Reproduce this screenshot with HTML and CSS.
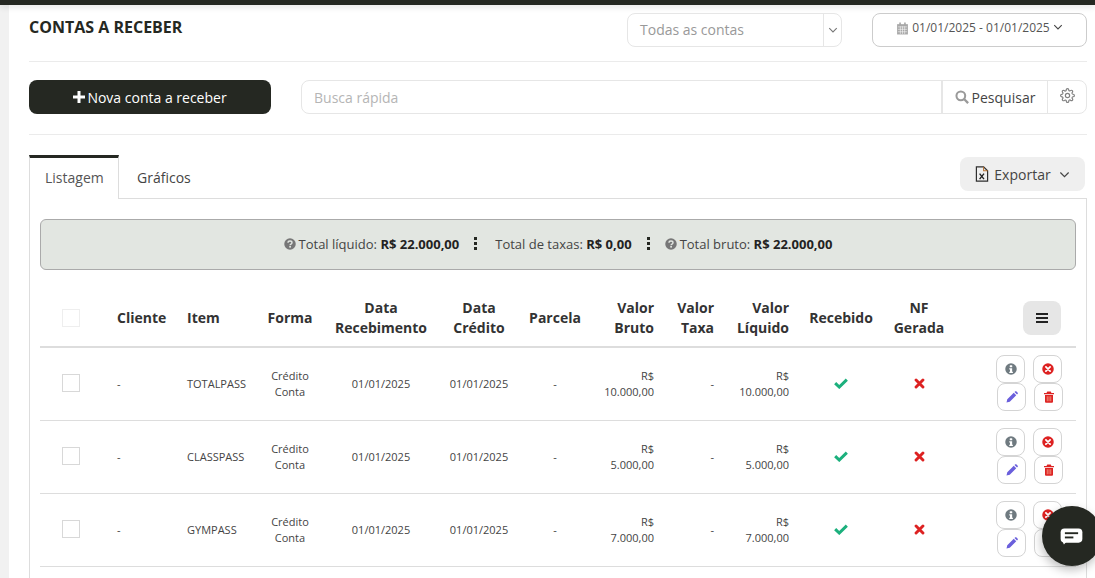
FILE: index.html
```html
<!DOCTYPE html>
<html>

<head>
    <meta http-equiv="Content-Type" content="text/html; charset=utf-8" />
    <title>Contas a receber</title>
    <link rel="stylesheet" href="styles.css">
</head>

<body>
    <svg class="defs" width="0" height="0">
        <symbol id="i-info" viewBox="0 0 24 24">
            <circle cx="12" cy="12" r="11.500" fill="currentColor" />
            <rect x="9.500" y="4.500" width="5" height="4" rx="1" fill="#fff" />
            <path d="M8.500 10.500h5.800v7h1.500v2.500H8.500v-2.500h1.500v-4.500H8.500z" fill="#fff" />
        </symbol>
        <symbol id="i-cancel" viewBox="0 0 24 24">
            <circle cx="12" cy="12" r="11.500" fill="currentColor" />
            <path d="M7.800 7.800l8.400 8.400M16.200 7.800l-8.400 8.400" stroke="#fff" stroke-width="3.600" stroke-linecap="round" />
        </symbol>
        <symbol id="i-pencil" viewBox="0 0 24 24">
            <path d="M1 23l1.500-6.500L15.500 3.500l5 5L7.500 21.500zM17 2l1-1c1-1 2-1 3 0l2 2c1 1 1 2 0 3l-1 1z" fill="currentColor" />
        </symbol>
        <symbol id="i-trash" viewBox="0 0 24 24">
            <path d="M8.500 1h7l1.500 3h5v2.500H2V4h5zM4 8h16v13c0 1.500-1 2.500-2.500 2.500h-11C5 23.500 4 22.500 4 21z" fill="currentColor" />
            <path d="M8.500 10.500v10M12 10.500v10M15.500 10.500v10" stroke="#f5a58e" stroke-width="1.600" />
        </symbol>
        <symbol id="i-check" viewBox="0 0 24 18">
            <path d="M2 8.500l7 6.500L22 2.500" fill="none" stroke="currentColor" stroke-width="5.200" />
        </symbol>
        <symbol id="i-times" viewBox="0 0 24 24">
            <path d="M4.500 4.500l15 15M19.500 4.500l-15 15" fill="none" stroke="currentColor" stroke-width="6.400" stroke-linecap="round" />
        </symbol>
        <symbol id="i-help" viewBox="0 0 24 24">
            <circle cx="12" cy="12" r="11.500" fill="currentColor" />
            <path d="M8 9.500c0-2.300 1.800-3.500 4-3.500s4 1.300 4 3.300c0 3-3.800 2.900-3.800 5.200" fill="none" stroke="#e2e6e1" stroke-width="2.800" />
            <rect x="10.500" y="16" width="3.400" height="3.200" fill="#e2e6e1" />
        </symbol>
        <symbol id="i-chevron" viewBox="0 0 12 12">
            <path d="M1.500 3.800L6 8.300l4.500-4.500" fill="none" stroke="currentColor" stroke-width="1.300" />
        </symbol>
    </svg>

    <div class="topbar"></div>

    <div class="main">
        <div class="head">
            <h1 class="head-title">CONTAS A RECEBER</h1>
            <div class="account-select">
                <span class="account-select-text">Todas as contas</span>
                <span class="account-select-arrow"><svg class="ico-arrow"><use href="#i-chevron" /></svg></span>
            </div>
            <div class="date-range">
                <svg class="ico-cal" viewBox="0 0 24 24">
                    <path d="M2 4h20v19H2z" fill="#a8a8a8" />
                    <path d="M6 1h3v5H6zM15 1h3v5h-3z" fill="#a8a8a8" />
                    <path d="M3.500 9h17M3.500 13.500h17M3.500 18h17M8 8v14M12 8v14M16 8v14" stroke="#fff" stroke-width="1" />
                </svg>
                01/01/2025 - 01/01/2025
                <svg class="ico-10"><use href="#i-chevron" /></svg>
            </div>
        </div>

        <div class="tools">
            <div class="btn-new">
                <svg class="ico-plus" viewBox="0 0 12 12"><path d="M4.500 0h3v4.500H12v3H7.500V12h-3V7.500H0v-3h4.500z" fill="#fff" /></svg>
                Nova conta a receber
            </div>
            <div class="search">
                <span class="search-input">Busca rápida</span>
                <span class="search-btn">
                    <svg class="ico-search" viewBox="0 0 24 24">
                        <circle cx="10" cy="10" r="7.500" fill="none" stroke="#9a9a9a" stroke-width="3.500" />
                        <path d="M15.500 15.500l7 7" stroke="#9a9a9a" stroke-width="4" />
                    </svg>
                    Pesquisar
                </span>
                <span class="search-gear">
                    <svg class="ico-gear" viewBox="0 0 24 24" fill="none" stroke="#808080" stroke-width="1.900">
                        <circle cx="12" cy="12" r="3.400" />
                        <path d="M19.400 15a1.650 1.650 0 0 0 .33 1.820l.06.06a2 2 0 0 1 0 2.830 2 2 0 0 1-2.830 0l-.06-.06a1.650 1.650 0 0 0-1.820-.33 1.650 1.650 0 0 0-1 1.510V21a2 2 0 0 1-2 2 2 2 0 0 1-2-2v-.09A1.650 1.650 0 0 0 9 19.400a1.650 1.650 0 0 0-1.820.33l-.06.06a2 2 0 0 1-2.830 0 2 2 0 0 1 0-2.830l.06-.06a1.650 1.650 0 0 0 .33-1.820 1.650 1.650 0 0 0-1.510-1H3a2 2 0 0 1-2-2 2 2 0 0 1 2-2h.09A1.650 1.650 0 0 0 4.600 9a1.650 1.650 0 0 0-.33-1.820l-.06-.06a2 2 0 0 1 0-2.830 2 2 0 0 1 2.830 0l.06.06a1.650 1.650 0 0 0 1.820.33H9a1.650 1.650 0 0 0 1-1.510V3a2 2 0 0 1 2-2 2 2 0 0 1 2 2v.09a1.650 1.650 0 0 0 1 1.510 1.650 1.650 0 0 0 1.820-.33l.06-.06a2 2 0 0 1 2.830 0 2 2 0 0 1 0 2.830l-.06.06a1.650 1.650 0 0 0-.33 1.820V9a1.650 1.650 0 0 0 1.510 1H21a2 2 0 0 1 2 2 2 2 0 0 1-2 2h-.09a1.650 1.650 0 0 0-1.510 1z" />
                    </svg>
                </span>
            </div>
        </div>

        <div class="tabs">
            <div class="tab tab-on">Listagem</div>
            <div class="tab">Gráficos</div>
            <div class="export">
                <svg class="ico-xls" viewBox="0 0 16 20">
                    <path d="M1 1h9l5 5v13H1z" fill="none" stroke="#2f2f2f" stroke-width="1.500" />
                    <path d="M10 1v5h5" fill="none" stroke="#b8702f" stroke-width="1.300" />
                    <path d="M5 9.500l5.500 7M10.500 9.500l-5.500 7" stroke="#222" stroke-width="1.700" />
                </svg>
                Exportar
                <svg class="ico-11"><use href="#i-chevron" /></svg>
            </div>
        </div>

        <div class="panel">
            <div class="summary">
                <svg class="ico-help"><use href="#i-help" /></svg>
                <span class="summary-item">Total líquido: <b>R$ 22.000,00</b></span>
                <span class="dots"><i></i><i></i><i></i></span>
                <span class="summary-item">Total de taxas: <b>R$ 0,00</b></span>
                <span class="dots dots-last"><i></i><i></i><i></i></span>
                <svg class="ico-help"><use href="#i-help" /></svg>
                <span class="summary-item">Total bruto: <b>R$ 22.000,00</b></span>
            </div>

            <table class="grid">
                <colgroup>
                    <col class="c-check"><col class="c-client"><col class="c-item"><col class="c-form"><col class="c-date1">
                    <col class="c-date2"><col class="c-parc"><col class="c-gross"><col class="c-fee"><col class="c-net">
                    <col class="c-recv"><col class="c-nf"><col class="c-act">
                </colgroup>
                <thead>
                    <tr>
                        <th><span class="check check-head"></span></th>
                        <th class="left">Cliente</th>
                        <th class="left">Item</th>
                        <th>Forma</th>
                        <th>Data<br>Recebimento</th>
                        <th>Data<br>Crédito</th>
                        <th>Parcela</th>
                        <th class="right">Valor<br>Bruto</th>
                        <th class="right">Valor<br>Taxa</th>
                        <th class="right">Valor<br>Líquido</th>
                        <th>Recebido</th>
                        <th>NF<br>Gerada</th>
                        <th class="th-menu">
                            <span class="menu-btn">
                                <svg class="ico-bars" viewBox="0 0 12 10"><path d="M0 0h12v2H0zM0 4h12v2H0zM0 8h12v2H0z" fill="#222" /></svg>
                            </span>
                        </th>
                    </tr>
                </thead>
                <tbody>
                    <tr>
                        <td><span class="check"></span></td>
                        <td class="left">-</td>
                        <td class="left">TOTALPASS</td>
                        <td>Crédito<br>Conta</td>
                        <td>01/01/2025</td>
                        <td>01/01/2025</td>
                        <td>-</td>
                        <td class="right">R$<br>10.000,00</td>
                        <td class="right">-</td>
                        <td class="right">R$<br>10.000,00</td>
                        <td><svg class="ico-ok"><use href="#i-check" /></svg></td>
                        <td><svg class="ico-no"><use href="#i-times" /></svg></td>
                        <td>
                            <div class="acts">
                                <div class="acts-row">
                                    <span class="act"><svg class="c-gray"><use href="#i-info" /></svg></span>
                                    <span class="act"><svg class="c-red"><use href="#i-cancel" /></svg></span>
                                </div>
                                <div class="acts-row">
                                    <span class="act"><svg class="c-blue"><use href="#i-pencil" /></svg></span>
                                    <span class="act"><svg class="c-red"><use href="#i-trash" /></svg></span>
                                </div>
                            </div>
                        </td>
                    </tr>
                    <tr>
                        <td><span class="check"></span></td>
                        <td class="left">-</td>
                        <td class="left">CLASSPASS</td>
                        <td>Crédito<br>Conta</td>
                        <td>01/01/2025</td>
                        <td>01/01/2025</td>
                        <td>-</td>
                        <td class="right">R$<br>5.000,00</td>
                        <td class="right">-</td>
                        <td class="right">R$<br>5.000,00</td>
                        <td><svg class="ico-ok"><use href="#i-check" /></svg></td>
                        <td><svg class="ico-no"><use href="#i-times" /></svg></td>
                        <td>
                            <div class="acts">
                                <div class="acts-row">
                                    <span class="act"><svg class="c-gray"><use href="#i-info" /></svg></span>
                                    <span class="act"><svg class="c-red"><use href="#i-cancel" /></svg></span>
                                </div>
                                <div class="acts-row">
                                    <span class="act"><svg class="c-blue"><use href="#i-pencil" /></svg></span>
                                    <span class="act"><svg class="c-red"><use href="#i-trash" /></svg></span>
                                </div>
                            </div>
                        </td>
                    </tr>
                    <tr>
                        <td><span class="check"></span></td>
                        <td class="left">-</td>
                        <td class="left">GYMPASS</td>
                        <td>Crédito<br>Conta</td>
                        <td>01/01/2025</td>
                        <td>01/01/2025</td>
                        <td>-</td>
                        <td class="right">R$<br>7.000,00</td>
                        <td class="right">-</td>
                        <td class="right">R$<br>7.000,00</td>
                        <td><svg class="ico-ok"><use href="#i-check" /></svg></td>
                        <td><svg class="ico-no"><use href="#i-times" /></svg></td>
                        <td>
                            <div class="acts">
                                <div class="acts-row">
                                    <span class="act"><svg class="c-gray"><use href="#i-info" /></svg></span>
                                    <span class="act"><svg class="c-red"><use href="#i-cancel" /></svg></span>
                                </div>
                                <div class="acts-row">
                                    <span class="act"><svg class="c-blue"><use href="#i-pencil" /></svg></span>
                                    <span class="act"><svg class="c-red"><use href="#i-trash" /></svg></span>
                                </div>
                            </div>
                        </td>
                    </tr>
                </tbody>
            </table>
        </div>
    </div>

    <div class="chat">
        <svg class="ico-chat" viewBox="0 0 24 18">
            <rect x="0.500" y="0.500" width="23" height="15" rx="4" fill="#fff" />
            <path d="M2 13h6l-4 4.500z" fill="#fff" />
            <path d="M5 5.500h14" stroke="#252822" stroke-width="2" />
            <path d="M5 10h9" stroke="#252822" stroke-width="2" />
        </svg>
    </div>
</body>

</html>
```

FILE: styles.css
```css
html, body {
    height: 100%;
    margin: 0px;
    padding: 0px;
    overflow: hidden;
}

body {
    background: #f1f1f1;
    font-family: "Open Sans", "Liberation Sans", sans-serif;
    font-size: 14px;
    color: #333;
    padding-left: 9px;
    box-sizing: border-box;
    display: flex;
    flex-direction: column;
}

.defs {
    position: absolute;
}

.topbar {
    height: 5px;
    flex: none;
    margin-left: -9px;
    background: #252822;
    box-shadow: 0 2px 6px rgba(0, 0, 0, 0.12);
    position: relative;
}

.main {
    flex: 1;
    min-height: 0;
    overflow: hidden;
    background: #fff;
    padding: 0 8px 0 20px;
}

/* cabecalho */
.head {
    display: flex;
    align-items: flex-start;
    padding-top: 8px;
    height: 48px;
    border-bottom: 1px solid #ebebeb;
}

.head-title {
    flex: 1;
    margin: 3px 0 0 0;
    font-size: 16px;
    line-height: 22px;
    font-weight: 700;
    color: #252822;
}

.account-select {
    width: 215px;
    height: 34px;
    display: flex;
    box-sizing: border-box;
    border: 1px solid #e6e6e6;
    border-radius: 8px;
    color: #999;
}

.account-select-text {
    flex: 1;
    padding-left: 12px;
    line-height: 32px;
}

.account-select-arrow {
    width: 18px;
    box-sizing: border-box;
    border-left: 1px solid #e6e6e6;
    display: flex;
    align-items: center;
    justify-content: center;
    color: #777;
}

.date-range {
    width: 215px;
    height: 34px;
    margin-left: 30px;
    box-sizing: border-box;
    border: 1px solid #ccc;
    border-radius: 8px;
    display: flex;
    justify-content: center;
    gap: 3px;
    padding-top: 5px;
    font-size: 12px;
    line-height: 18px;
    color: #555;
}

.ico-cal {
    width: 13px;
    height: 13px;
    margin-top: 3px;
}

.ico-arrow {
    width: 10px;
    height: 10px;
}

.ico-10 {
    width: 10px;
    height: 10px;
    margin-top: 3px;
    color: #444;
}

.ico-11 {
    width: 11px;
    height: 11px;
    margin-left: 3px;
    color: #444;
}

/* barra de busca */
.tools {
    display: flex;
    gap: 30px;
    padding: 18px 0 20px;
    border-bottom: 1px solid #ebebeb;
}

.btn-new {
    width: 242px;
    height: 34px;
    background: #252822;
    border-radius: 8px;
    color: #fff;
    display: flex;
    align-items: center;
    justify-content: center;
    gap: 2px;
}

.ico-plus {
    width: 12px;
    height: 12px;
}

.search {
    flex: 1;
    height: 34px;
    display: flex;
    box-sizing: border-box;
    border: 1px solid #e6e6e6;
    border-radius: 8px;
}

.search-input {
    flex: 1;
    padding-left: 12px;
    line-height: 33px;
    color: #b5b5b5;
}

.search-btn {
    width: 106px;
    box-sizing: border-box;
    border-left: 2px solid #e6e6e6;
    display: flex;
    align-items: center;
    justify-content: center;
    gap: 3px;
    color: #444;
}

.ico-search {
    width: 14px;
    height: 14px;
}

.search-gear {
    width: 39px;
    box-sizing: border-box;
    border-left: 1px solid #e6e6e6;
    display: flex;
    align-items: center;
    justify-content: center;
    padding-bottom: 3px;
}

.ico-gear {
    width: 15px;
    height: 15px;
}

/* abas */
.tabs {
    display: flex;
    align-items: flex-start;
    margin-top: 20px;
    height: 43px;
}

.tab {
    height: 43px;
    box-sizing: border-box;
    padding: 12px 18px 0 18px;
    line-height: 22px;
    color: #444;
}

.tab-on {
    width: 90px;
    padding-left: 15px;
    padding-right: 0;
    padding-top: 9px;
    background: #fff;
    border: 1px solid #ddd;
    border-top: 3px solid #252822;
    border-bottom: 0;
    color: #555;
    position: relative;
    z-index: 1;
    height: 44px;
}

.export {
    margin-left: auto;
    margin-right: 2px;
    margin-top: 2px;
    width: 125px;
    height: 34px;
    background: #efefef;
    border-radius: 8px;
    display: flex;
    align-items: center;
    justify-content: center;
    gap: 5px;
    color: #444;
}

.ico-xls {
    width: 14px;
    height: 16px;
}

/* painel */
.panel {
    border: 1px solid #ddd;
    padding: 20px 10px 60px;
}

.summary {
    height: 51px;
    box-sizing: border-box;
    background: #e2e6e1;
    border: 1px solid #aaa;
    border-radius: 6px;
    padding-bottom: 2px;
    display: flex;
    align-items: center;
    justify-content: center;
    font-size: 13px;
    color: #444;
}

.summary b {
    color: #222;
}

.ico-help {
    width: 12px;
    height: 12px;
    color: #777;
    margin-right: 3px;
}

.dots {
    width: 3px;
    display: flex;
    flex-direction: column;
    gap: 2px;
    margin: 0 18px 0 15px;
}

.dots-last {
    margin-right: 15px;
}

.dots i {
    display: block;
    width: 3px;
    height: 3px;
    background: #252822;
}

/* tabela */
.grid {
    width: 1036px;
    margin-top: 26px;
    border-collapse: collapse;
    table-layout: fixed;
    font-size: 11px;
}

.c-check { width: 67px; }
.c-client { width: 70px; }
.c-item { width: 80px; }
.c-form { width: 66px; }
.c-date1 { width: 116px; }
.c-date2 { width: 80px; }
.c-parc { width: 72px; }
.c-gross { width: 73px; }
.c-fee { width: 60px; }
.c-net { width: 75px; }
.c-recv { width: 84px; }
.c-nf { width: 72px; }
.c-act { width: 121px; }

.grid th {
    height: 51px;
    box-sizing: border-box;
    padding: 0 10px 7px;
    text-align: center;
    font-size: 14px;
    font-weight: 700;
    line-height: 20px;
    color: #333;
    border-bottom: 2px solid #ddd;
}

.grid td {
    height: 72px;
    padding: 0 10px;
    text-align: center;
    line-height: 16px;
    color: #444;
    border-bottom: 1px solid #ddd;
}

.grid .left {
    text-align: left;
}

.grid .right {
    text-align: right;
}

.grid th:first-child,
.grid td:first-child {
    padding-left: 22px;
    padding-right: 0;
    text-align: left;
}

.grid .th-menu {
    padding-left: 0;
    padding-right: 15px;
    text-align: right;
}

.menu-btn {
    width: 38px;
    height: 34px;
    background: #e6e6e6;
    border-radius: 8px;
    display: inline-flex;
    align-items: center;
    justify-content: center;
    vertical-align: middle;
}

.ico-bars {
    width: 12px;
    height: 10px;
}

.check {
    display: block;
    width: 18px;
    height: 18px;
    margin-bottom: 2px;
    box-sizing: border-box;
    border: 1px solid #d8d8d8;
}

.check-head {
    border-color: #eee;
    margin-bottom: 0;
}

.ico-ok {
    width: 14px;
    height: 11px;
    margin-bottom: 3px;
    vertical-align: middle;
    color: #1cb07d;
}

.ico-no {
    width: 11px;
    height: 11px;
    margin-bottom: 3px;
    vertical-align: middle;
    color: #dd2222;
}

.grid td:last-child {
    padding: 0;
}

.acts {
    padding-left: 41px;
    margin-bottom: 2px;
}

.acts-row {
    display: flex;
    gap: 8px;
}

.acts-row + .acts-row {
    margin-left: 1px;
}

.act {
    width: 29px;
    height: 28px;
    box-sizing: border-box;
    border: 1px solid #d4d4d4;
    border-radius: 8px;
    display: flex;
    align-items: center;
    justify-content: center;
}

.act svg {
    width: 12px;
    height: 12px;
}

.c-gray {
    color: #6f7a80;
}

.c-red {
    color: #dd2222;
}

.c-blue {
    color: #6a5fdc;
}

/* botao do chat */
.chat {
    position: fixed;
    left: 1042px;
    top: 506px;
    width: 60px;
    height: 60px;
    border-radius: 50%;
    background: #252822;
    box-shadow: -1px 4px 10px rgba(0, 0, 0, 0.25);
    display: flex;
    align-items: center;
    justify-content: center;
}

.ico-chat {
    width: 23px;
    height: 17px;
    margin-right: 1px;
}
```
